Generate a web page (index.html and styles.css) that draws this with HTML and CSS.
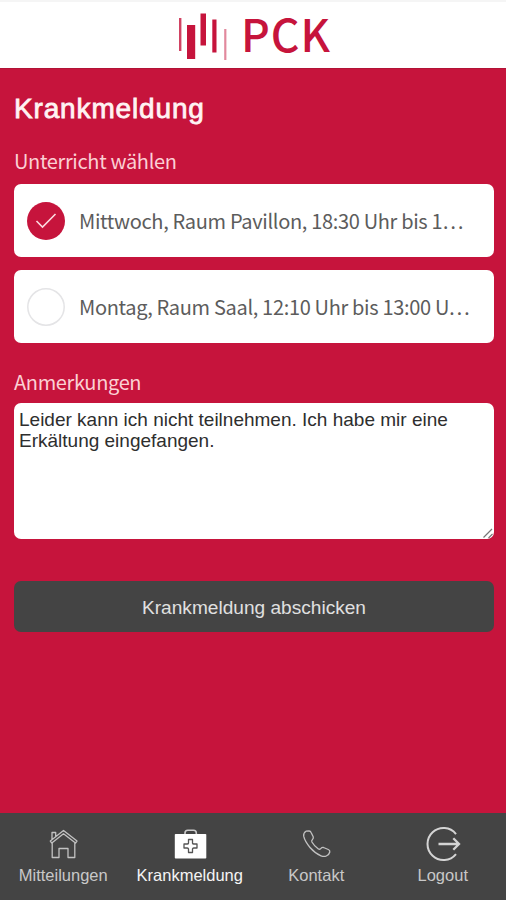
FILE: index.html
```html
<!DOCTYPE html>
<html lang="de">
<head>
<meta charset="utf-8">
<title>Krankmeldung</title>
<link rel="stylesheet" href="styles.css">
</head>
<body>
<header class="topbar">
  <svg class="bars" width="50" height="50" viewBox="0 0 50 50">
    <g fill="#c6143c">
      <rect x="1" y="7" width="2.4" height="33" opacity=".8"/>
      <rect x="9" y="14" width="8.2" height="34"/>
      <rect x="22.500" y="2.500" width="5.500" height="32"/>
      <rect x="34.300" y="8.500" width="4.200" height="33"/>
      <rect x="46.200" y="18" width="2.200" height="31" opacity=".5"/>
    </g>
  </svg>
  <span class="brand">PCK</span>
</header>
<main class="content">
  <h1 class="title">Krankmeldung</h1>
  <p class="label">Unterricht wählen</p>
  <div class="options">
    <div class="option">
      <svg class="radio" width="38" height="38" viewBox="0 0 38 38"><circle cx="19" cy="19" r="19" fill="#c6143c"/><path d="M9.500 19 L15.500 25 L28.500 12" fill="none" stroke="#fbd9df" stroke-width="1.600"/></svg>
      <span class="option-text">Mittwoch, Raum Pavillon, 18:30 Uhr bis 1…</span>
    </div>
    <div class="option">
      <svg class="radio" width="38" height="38" viewBox="0 0 38 38"><circle cx="19" cy="19" r="18.200" fill="#fff" stroke="#e4e4e6" stroke-width="1.500"/></svg>
      <span class="option-text">Montag, Raum Saal, 12:10 Uhr bis 13:00 U…</span>
    </div>
  </div>
  <p class="label notes">Anmerkungen</p>
  <div class="note">
    <p class="note-text">Leider kann ich nicht teilnehmen. Ich habe mir eine<br>Erkältung eingefangen.</p>
    <svg class="grip" width="12" height="12" viewBox="0 0 12 12"><path d="M1.500 10.500 L10 2 M6.500 11 L10.500 7" fill="none" stroke="#777" stroke-width="1.200"/></svg>
  </div>
  <button class="submit" type="button"><span>Krankmeldung abschicken</span></button>
</main>
<nav class="tabs">
  <a class="tab">
    <svg width="36" height="36" viewBox="0 0 36 36" fill="none" stroke="#c2c2c2" stroke-width="1.300" stroke-linejoin="round"><path d="M5.300 15 L18.500 4.500 L32 15 L30.500 17 L18.500 7.800 L6.800 17 Z M7 13.300 V6.500 H10.700 V10.300 M7.200 17 V31.500 H14 V22.500 H23 V31.500 H29.800 V17"/></svg>
    <span>Mitteilungen</span>
  </a>
  <a class="tab active">
    <svg width="36" height="36" viewBox="0 0 36 36"><path d="M13 9 V7 Q13 4.200 15.800 4.200 H21.500 Q24.300 4.200 24.300 7 V9" fill="none" stroke="#ccc" stroke-width="1.600"/><rect x="2.800" y="8" width="31.500" height="24.500" rx=".8" fill="#fff"/><path d="M16.500 13.500 H20.500 V17 Q20.700 18 21.700 18 H25 V22 H21.700 Q20.700 22 20.500 23 V26.500 H16.500 V23 Q16.300 22 15.300 22 H12 V18 H15.300 Q16.300 18 16.500 17 Z" fill="#fff" stroke="#555" stroke-width="1.300" stroke-linejoin="round"/></svg>
    <span>Krankmeldung</span>
  </a>
  <a class="tab">
    <svg width="36" height="36" viewBox="0 0 36 36" fill="none" stroke="#c2c2c2" stroke-width="1.300" stroke-linejoin="round"><path d="M8 5.200 L11.100 5 Q12.500 5.100 13.100 6.500 L15.200 10.800 Q15.700 12.300 14.500 13.400 Q13.300 14.500 13.900 16 Q16.300 20.200 20.400 23 Q21.700 23.700 22.700 22.600 Q24 21.200 25.500 21.500 L30.300 23.500 Q32.100 24.300 31.800 26 Q31.200 28.700 28.300 30 Q26 31 23 29.800 Q17 27.300 12 21.500 Q6.800 15.300 5.700 10.200 Q5.200 7 8 5.200 Z"/></svg>
    <span>Kontakt</span>
  </a>
  <a class="tab">
    <svg width="36" height="36" viewBox="0 0 36 36" fill="none" stroke="#d4d4d4" stroke-width="2"><path d="M31 8 A16 16 0 1 0 31 28"/><path d="M13.500 18 H33.500 M28.300 12.200 L34 18 L28.300 23.800" stroke-width="2.300"/></svg>
    <span>Logout</span>
  </a>
</nav>
</body>
</html>
```
FILE: styles.css
```css
* { box-sizing: border-box; }
body {
  margin: 0;
  height: 900px;
  display: flex;
  flex-direction: column;
  background: #c6143c;
  font-family: "Liberation Sans", sans-serif;
  overflow: hidden;
}
.topbar {
  height: 69px;
  flex: none;
  display: flex;
  background: #fff;
  border-top: 2px solid #f5f5f5;
  border-bottom: 1px solid #b11336;
  padding: 9px 0 0 178px;
}
.brand {
  margin: -3px 0 0 13px;
  font: 500 44.500px/50px "Noto Sans CJK SC", sans-serif;
  letter-spacing: 1px;
  color: #c6143c;
}
.content {
  flex: 1;
  display: flex;
  flex-direction: column;
  padding: 24px 12px 0 14px;
}
.title {
  margin: 0;
  font-size: 28px;
  line-height: 32px;
  font-weight: 400;
  letter-spacing: .850px;
  color: #fff3f3;
  -webkit-text-stroke: .8px #fff3f3;
  white-space: nowrap;
}
.label {
  margin: 21px 0 0;
  font: 400 20px/30px "Noto Sans CJK SC", sans-serif;
  letter-spacing: -.350px;
  color: #fbd0d4;
}
.options {
  display: flex;
  flex-direction: column;
  gap: 13px;
  margin-top: 8px;
}
.option {
  display: flex;
  align-items: center;
  gap: 14px;
  height: 73px;
  padding-left: 13px;
  border-radius: 7px;
  background: #fff;
}
.option-text {
  font: 400 20px/30px "Noto Sans CJK SC", sans-serif;
  letter-spacing: -.330px;
  color: #5c5c5c;
  white-space: nowrap;
}
.label.notes { margin-top: 24px; }
.note {
  position: relative;
  height: 136px;
  margin-top: 6px;
  padding: 6px 6px 0 5px;
  border-radius: 7px;
  background: #fff;
}
.note-text {
  margin: 0;
  font-size: 19px;
  line-height: 21px;
  color: #2e2e2e;
  white-space: nowrap;
}
.grip { position: absolute; right: 0; bottom: 0; }
.submit {
  height: 51px;
  margin-top: 42px;
  padding: 3px 0 0;
  border: 0;
  border-radius: 7px;
  background: #444;
  color: #e0e0e0;
  font: 400 19.100px/24px "Liberation Sans", sans-serif;
}
.tabs {
  height: 87px;
  flex: none;
  display: flex;
  background: #444;
}
.tab {
  flex: 1;
  display: flex;
  flex-direction: column;
  align-items: center;
  padding-top: 13px;
  font-size: 16.500px;
  line-height: 22px;
  color: #c8c8c8;
}
.tab span { margin-top: 2px; }
.active { color: #f4f4f4; }
```
